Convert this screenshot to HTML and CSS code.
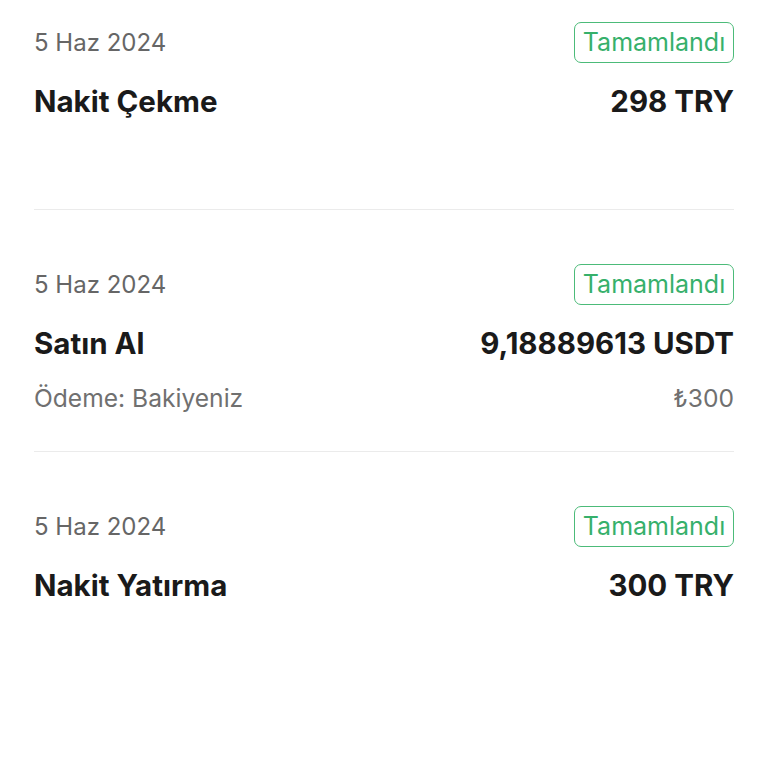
FILE: index.html
```html
<!DOCTYPE html>
<html lang="tr">
<head>
<meta charset="utf-8">
<title>İşlemler</title>
<link rel="stylesheet" href="styles.css">
</head>
<body>
<div class="list">
  <div class="item first">
    <div class="row top">
      <span class="date">5 Haz 2024</span>
      <span class="badge">Tamamlandı</span>
    </div>
    <div class="row main">
      <span class="title">Nakit Çekme</span>
      <span class="amount">298 TRY</span>
    </div>
  </div>
  <div class="item">
    <div class="row top">
      <span class="date">5 Haz 2024</span>
      <span class="badge">Tamamlandı</span>
    </div>
    <div class="row main">
      <span class="title">Satın Al</span>
      <span class="amount">9,18889613 USDT</span>
    </div>
    <div class="row sub">
      <span class="note">Ödeme: Bakiyeniz</span>
      <span class="note">₺300</span>
    </div>
  </div>
  <div class="item last">
    <div class="row top">
      <span class="date">5 Haz 2024</span>
      <span class="badge">Tamamlandı</span>
    </div>
    <div class="row main">
      <span class="title">Nakit Yatırma</span>
      <span class="amount">300 TRY</span>
    </div>
  </div>
</div>
</body>
</html>
```
FILE: styles.css
```css
html, body {
  margin: 0;
  padding: 0;
  background: #ffffff;
}
body {
  font-family: Inter, "Noto Sans", sans-serif;
  color: #1a1a1a;
}
.list {
  padding: 0 34px;
}
.item {
  box-sizing: border-box;
  height: 242px;
  padding-top: 53px;
  border-bottom: 1px solid #ebebeb;
  display: flex;
  flex-direction: column;
}
.item.first {
  height: 210px;
  padding-top: 21px;
}
.item.last {
  border-bottom: none;
}
.row {
  display: flex;
  justify-content: space-between;
  align-items: center;
}
.row.top {
  height: 42px;
}
.row.main {
  margin-top: 20px;
  height: 36px;
}
.row.sub {
  margin-top: 22px;
  height: 30px;
}
.date {
  font-size: 24px;
  color: #666666;
}
.badge {
  box-sizing: border-box;
  height: 41px;
  width: 160px;
  border: 1.5px solid #4cbb79;
  border-radius: 7px;
  color: #36b06b;
  font-size: 25px;
  display: flex;
  align-items: center;
  justify-content: center;
}
.title, .amount {
  font-size: 29.5px;
  font-weight: 700;
  color: #1a1a1a;
}
.note {
  font-size: 24.6px;
  color: #707070;
}
```
